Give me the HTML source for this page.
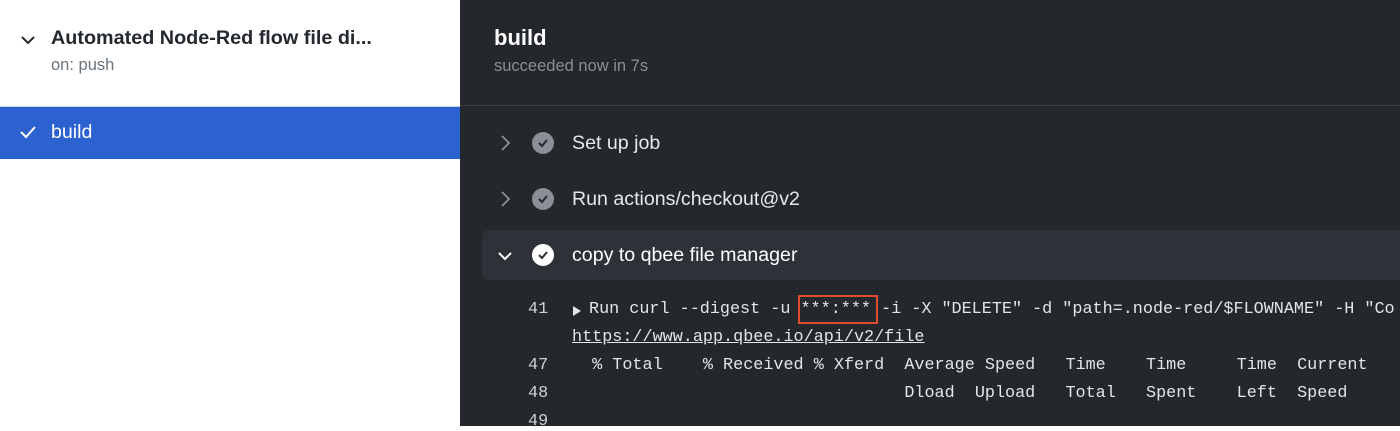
<!DOCTYPE html>
<html><head><style>
body{margin:0;width:1400px;height:426px;overflow:hidden;font-family:"Liberation Sans",sans-serif;position:relative;background:#fff}
.l{position:absolute;left:0;top:0;width:460px;height:426px;background:#fff}
.r{position:absolute;left:460px;top:0;width:940px;height:426px;background:#24272b;color:#e6e8ea}
.abs{position:absolute;white-space:pre}
.mono{font-family:"Liberation Mono",monospace;font-size:16.8px;color:#e3e5e8}
.ln{color:#d0d3d6}
.ci{position:absolute;width:22px;height:22px;border-radius:50%}
.st{font-size:19.6px}
</style></head><body>
<div class="l">
 <svg class="abs" style="left:20px;top:33px" width="16" height="14"><path d="M2 4l6 6 6-6" stroke="#24292f" stroke-width="2" fill="none"/></svg>
 <div class="abs" style="left:51px;top:27px;font-size:19.8px;font-weight:bold;color:#24292f">Automated Node-Red flow file di...</div>
 <div class="abs" style="left:51px;top:56px;font-size:16.5px;color:#6a737d">on: push</div>
 <div class="abs" style="left:0;top:106px;width:460px;height:52px;background:#2c62cf;border-top:1px solid #c9d4e8"></div>
 <svg class="abs" style="left:19px;top:124px" width="18" height="16"><path d="M2 8l5 5 9-10" stroke="#fff" stroke-width="2" fill="none"/></svg>
 <div class="abs" style="left:51px;top:121px;font-size:19.6px;color:#fff">build</div>
</div>
<div class="r">
 <div class="abs" style="left:34px;top:25px;font-size:22px;font-weight:bold;color:#fff">build</div>
 <div class="abs" style="left:34px;top:57px;font-size:16.5px;color:#8b9096">succeeded now in 7s</div>
 <div class="abs" style="left:0;top:105px;width:940px;height:1px;background:#3a3e44"></div>
 <svg class="abs" style="left:38px;top:134px" width="14" height="18"><path d="M4 2l7 7-7 7" stroke="#8b9096" stroke-width="1.8" fill="none"/></svg>
 <div class="ci" style="left:72px;top:132px;background:#8b9096"></div>
 <svg class="abs" style="left:76px;top:136px" width="14" height="14"><path d="M3 7l3 3 5-6" stroke="#24272b" stroke-width="2" fill="none"/></svg>
 <div class="abs st" style="left:112px;top:132px">Set up job</div>
 <svg class="abs" style="left:38px;top:190px" width="14" height="18"><path d="M4 2l7 7-7 7" stroke="#8b9096" stroke-width="1.8" fill="none"/></svg>
 <div class="ci" style="left:72px;top:188px;background:#8b9096"></div>
 <svg class="abs" style="left:76px;top:192px" width="14" height="14"><path d="M3 7l3 3 5-6" stroke="#24272b" stroke-width="2" fill="none"/></svg>
 <div class="abs st" style="left:112px;top:188px">Run actions/checkout@v2</div>
 <div class="abs" style="left:22px;top:230px;width:930px;height:50px;background:#2e3238;border-radius:7px"></div>
 <svg class="abs" style="left:36px;top:249px" width="18" height="14"><path d="M3 4l6 6 6-6" stroke="#fff" stroke-width="2" fill="none"/></svg>
 <div class="ci" style="left:72px;top:244px;background:#fff"></div>
 <svg class="abs" style="left:76px;top:248px" width="14" height="14"><path d="M3 7l3 3 5-6" stroke="#2e3238" stroke-width="2" fill="none"/></svg>
 <div class="abs st" style="left:112px;top:244px;color:#fff">copy to qbee file manager</div>
 <div class="abs mono ln" style="left:68px;top:300px">41</div>
 <svg class="abs" style="left:112px;top:305px" width="10" height="12"><path d="M1 1l8 5-8 5z" fill="#e3e5e8"/></svg>
 <div class="abs mono" style="left:129px;top:300px">Run curl --digest -u ***:*** -i -X "DELETE" -d "path=.node-red/$FLOWNAME" -H "Co</div>
 <div class="abs" style="left:338px;top:295px;width:80px;height:29px;border:2px solid #e04a2f;box-sizing:border-box"></div>
 <div class="abs mono" style="left:112px;top:328px;text-decoration:underline">https://www.app.qbee.io/api/v2/file</div>
 <div class="abs mono ln" style="left:68px;top:356px">47</div>
 <div class="abs mono" style="left:112px;top:356px">  % Total    % Received % Xferd  Average Speed   Time    Time     Time  Current</div>
 <div class="abs mono ln" style="left:68px;top:384px">48</div>
 <div class="abs mono" style="left:112px;top:384px">                                 Dload  Upload   Total   Spent    Left  Speed</div>
 <div class="abs mono ln" style="left:68px;top:412px">49</div>
</div>
</body></html>
